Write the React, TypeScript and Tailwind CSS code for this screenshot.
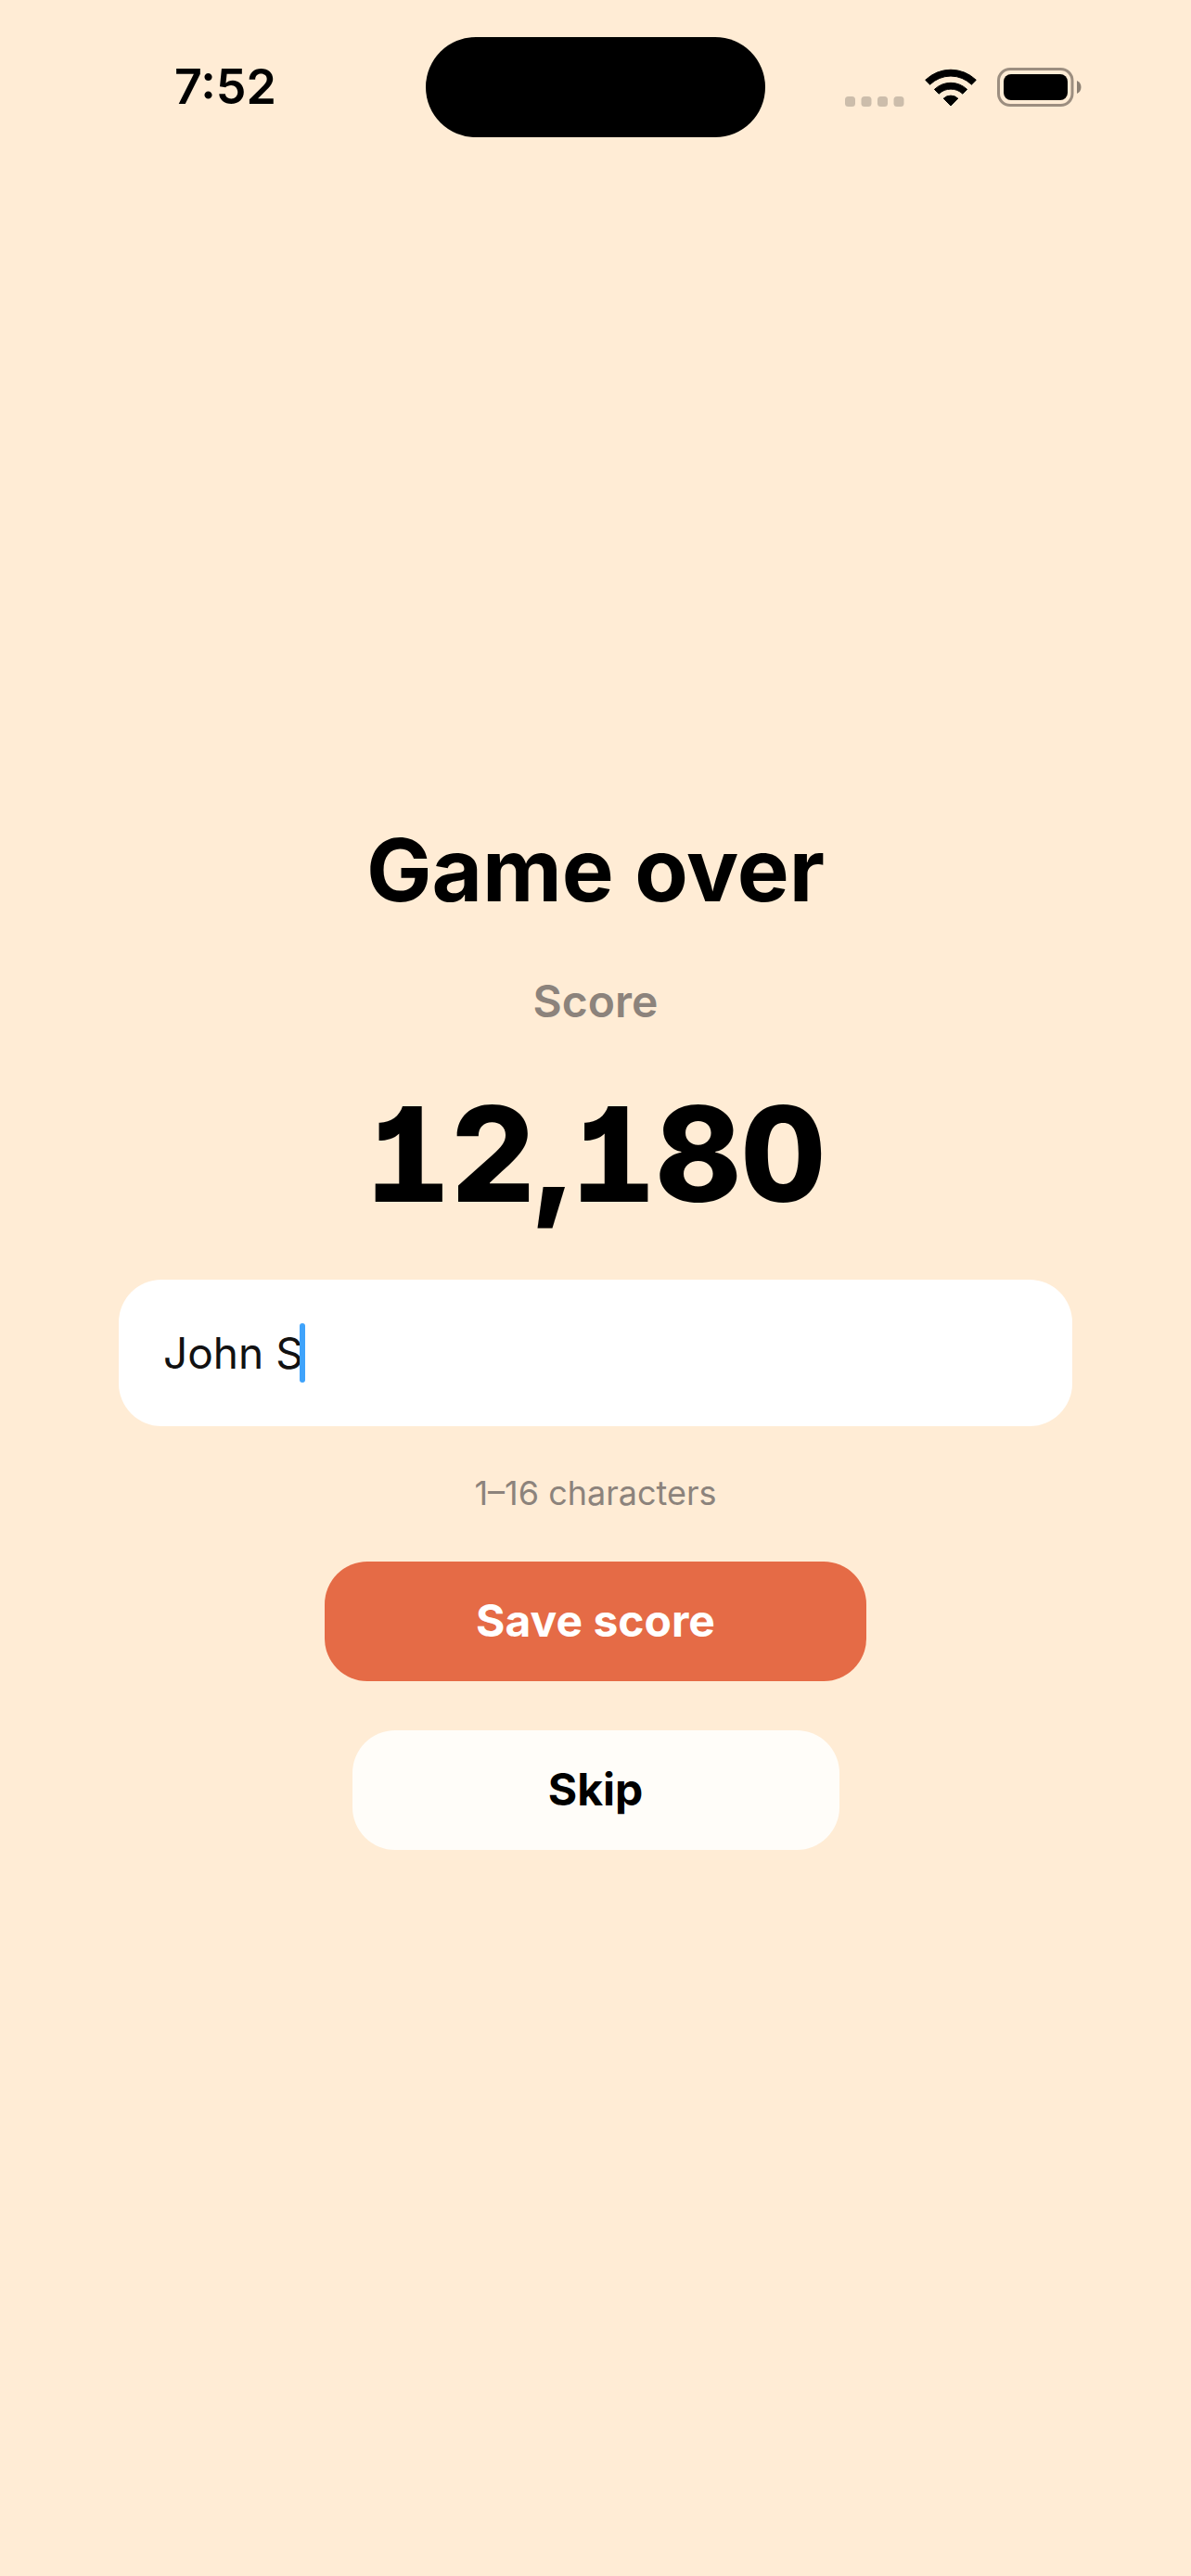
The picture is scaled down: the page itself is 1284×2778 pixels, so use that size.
import { useState } from "react";

function CellularDots() {
  return (
    <svg viewBox="0 0 64 11" className="h-[11px] w-16" fill="#ccbdab" aria-hidden="true">
      <rect x="0" width="11" height="11" rx="3.5" />
      <rect x="17.5" width="11" height="11" rx="3.5" />
      <rect x="35" width="11" height="11" rx="3.5" />
      <rect x="52.5" width="11" height="11" rx="3.5" />
    </svg>
  );
}

function WifiIcon() {
  return (
    <svg
      viewBox="0 0 56 41"
      className="h-[41px] w-14"
      fill="#000"
      stroke="#000"
      strokeWidth="1"
      strokeLinejoin="round"
      aria-hidden="true"
    >
      <path d="M.7 12.3A39.2 39.2 0 0 1 55.3 12.3L50.4 17.2A32 32 0 0 0 5.6 17.2Z" />
      <path d="M10.4 22.4A25.4 25.4 0 0 1 45.6 22.4L40.8 27.2A18.6 18.6 0 0 0 15.2 27.2Z" />
      <path d="M20.2 32.2A11.4 11.4 0 0 1 35.8 32.2L28 40Z" />
    </svg>
  );
}

function BatteryIcon() {
  return (
    <svg viewBox="0 0 91 42" className="h-[42px] w-[91px]" aria-hidden="true">
      <rect x="1.5" y="1.5" width="79.5" height="39" rx="12.5" fill="none" stroke="#9c8e80" strokeWidth="3" />
      <rect x="7" y="7" width="69" height="28" rx="8" fill="#000" />
      <path d="M86 14c3 1.200 4.500 4 4.500 7s-1.500 5.800-4.500 7Z" fill="#8c8073" />
    </svg>
  );
}

function StatusBar() {
  return (
    <header className="grid grid-cols-[1fr_366px_1fr] items-center pt-10">
      <time className="pl-[188px] text-[52px] leading-[60px] font-semibold">7:52</time>
      <div className="h-[108px] rounded-full bg-black" />
      <div className="flex items-end justify-end gap-[22px] pr-[118px]">
        <CellularDots />
        <WifiIcon />
        <BatteryIcon />
      </div>
    </header>
  );
}

export default function App() {
  const [name, setName] = useState("John S");

  return (
    <div className="flex min-h-screen flex-col bg-[#ffecd5] font-[Inter,sans-serif] text-black">
      <StatusBar />
      <main className="flex flex-1 flex-col items-center justify-center px-32 pb-[54px]">
        <h1 className="text-[94px] leading-[120px] font-bold">Game over</h1>
        <p className="mt-[52px] text-[48px] leading-[60px] font-semibold text-[#8c837c]">Score</p>
        <p className="mt-[50px] text-[142px] leading-[168px] font-extrabold [font-feature-settings:'tnum','cv01']">
          12,180
        </p>
        <form className="mt-[52px] flex w-full flex-col items-center" onSubmit={(e) => e.preventDefault()}>
          <label className="flex h-[158px] w-full items-center rounded-[46px] bg-white px-12">
            <input
              aria-label="Player name"
              className="[field-sizing:content] bg-transparent text-[46px] leading-[60px] text-[#111111] caret-transparent outline-none"
              maxLength={16}
              value={name}
              onChange={(e) => setName(e.target.value)}
            />
            <span className="-ml-1 h-16 w-[6px] rounded-full bg-[#3fa3fb]" />
          </label>
          <p className="mt-12 text-[36px] leading-[48px] text-[#8c837c]">1–16 characters</p>
          <button
            type="submit"
            className="mt-[50px] h-[129px] w-[584px] rounded-[46px] bg-[#e56b46] text-[48px] font-bold text-white"
          >
            Save score
          </button>
          <button
            type="button"
            className="mt-[53px] h-[129px] w-[525px] rounded-[46px] bg-[#fffdf9] text-[48px] font-bold"
          >
            Skip
          </button>
        </form>
      </main>
    </div>
  );
}
